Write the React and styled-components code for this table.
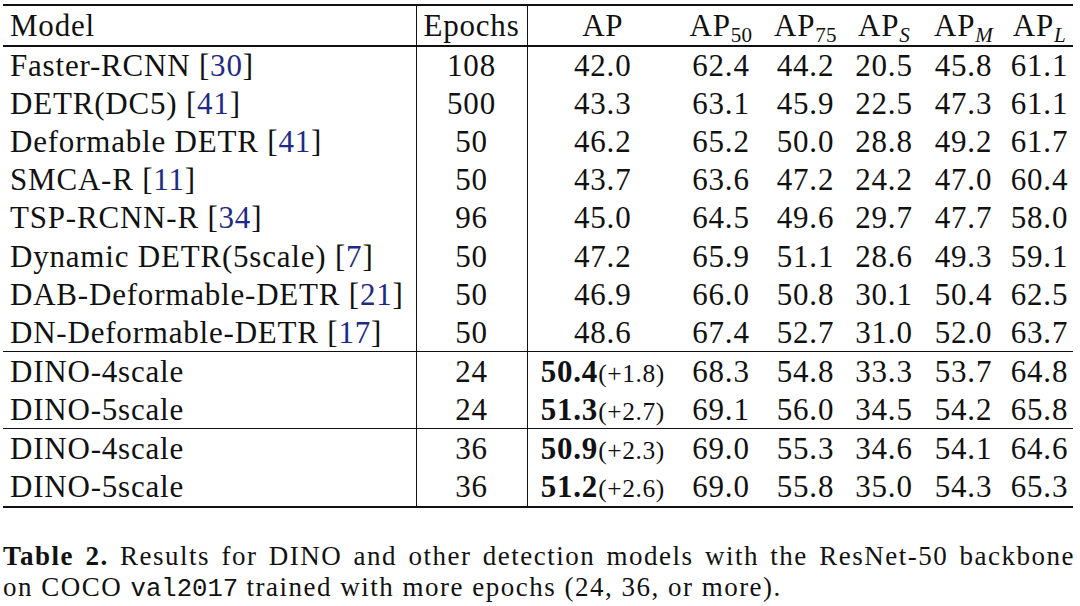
import React from 'react';
import styled, { createGlobalStyle } from 'styled-components';

const rows = [
  { group: 0, model: 'Faster-RCNN', cite: '30', epochs: '108', ap: '42.0', vals: ['62.4', '44.2', '20.5', '45.8', '61.1'] },
  { group: 0, model: 'DETR(DC5)', cite: '41', epochs: '500', ap: '43.3', vals: ['63.1', '45.9', '22.5', '47.3', '61.1'] },
  { group: 0, model: 'Deformable DETR', cite: '41', epochs: '50', ap: '46.2', vals: ['65.2', '50.0', '28.8', '49.2', '61.7'] },
  { group: 0, model: 'SMCA-R', cite: '11', epochs: '50', ap: '43.7', vals: ['63.6', '47.2', '24.2', '47.0', '60.4'] },
  { group: 0, model: 'TSP-RCNN-R', cite: '34', epochs: '96', ap: '45.0', vals: ['64.5', '49.6', '29.7', '47.7', '58.0'] },
  { group: 0, model: 'Dynamic DETR(5scale)', cite: '7', epochs: '50', ap: '47.2', vals: ['65.9', '51.1', '28.6', '49.3', '59.1'] },
  { group: 0, model: 'DAB-Deformable-DETR', cite: '21', epochs: '50', ap: '46.9', vals: ['66.0', '50.8', '30.1', '50.4', '62.5'] },
  { group: 0, model: 'DN-Deformable-DETR', cite: '17', epochs: '50', ap: '48.6', vals: ['67.4', '52.7', '31.0', '52.0', '63.7'] },
  { group: 1, model: 'DINO-4scale', epochs: '24', ap: '50.4', gain: '+1.8', vals: ['68.3', '54.8', '33.3', '53.7', '64.8'] },
  { group: 1, model: 'DINO-5scale', epochs: '24', ap: '51.3', gain: '+2.7', vals: ['69.1', '56.0', '34.5', '54.2', '65.8'] },
  { group: 2, model: 'DINO-4scale', epochs: '36', ap: '50.9', gain: '+2.3', vals: ['69.0', '55.3', '34.6', '54.1', '64.6'] },
  { group: 2, model: 'DINO-5scale', epochs: '36', ap: '51.2', gain: '+2.6', vals: ['69.0', '55.8', '35.0', '54.3', '65.3'] },
];

const colWidths = [413, 111, 151, 86, 83, 74, 85, 67];

const GlobalStyle = createGlobalStyle`
  html, body {
    margin: 0;
    padding: 0;
    background: #ffffff;
  }
  body {
    font-family: "Liberation Serif", "Times New Roman", serif;
    color: #111111;
  }
`;

const Page = styled.div`
  width: 1080px;
  height: 606px;
  overflow: hidden;
  padding: 4px 0 0 3px;
  box-sizing: border-box;
`;

const Table = styled.table`
  border-collapse: collapse;
  table-layout: fixed;
  width: 1070px;
  border-top: 2px solid #111;
  border-bottom: 2px solid #111;
  font-family: "Liberation Serif", "Times New Roman", serif;
  font-size: 31px;
  letter-spacing: 0.8px;
`;

const Head = styled.thead`
  border-bottom: 2px solid #111;
`;

const Group = styled.tbody`
  border-top: ${(p) => (p.$first ? '0' : '1px solid #111')};
`;

const Row = styled.tr`
  height: ${(p) => p.$h}px;
`;

const Cell = styled.td`
  padding: 0;
  white-space: nowrap;
  text-align: ${(p) => (p.$left ? 'left' : 'center')};
  padding-left: ${(p) => (p.$left ? '7px' : '0')};
  border-right: ${(p) => (p.$rule ? '1px solid #111' : '0')};
  font-weight: normal;
  line-height: 1;
  vertical-align: middle;
`;

const HeadCell = styled(Cell).attrs({ as: 'th' })``;

const Sub = styled.sub`
  font-size: 0.68em;
  vertical-align: -0.3em;
  line-height: 0;
  font-style: ${(p) => (p.$italic ? 'italic' : 'normal')};
  letter-spacing: 0.3px;
`;

const Cite = styled.span`
  color: #1f2a86;
`;

const Bold = styled.b`
  font-weight: bold;
`;

const Gain = styled.span`
  font-size: 0.82em;
  letter-spacing: 0.6px;
`;

const Caption = styled.div`
  margin-top: 33px;
  width: 1072px;
  font-size: 27px;
  line-height: 31px;
  letter-spacing: 1.5px;
  color: #111;
`;

const CaptionLine = styled.div`
  text-align: ${(p) => (p.$justify ? 'justify' : 'left')};
  text-align-last: ${(p) => (p.$justify ? 'justify' : 'left')};
  white-space: nowrap;
`;

const Mono = styled.span`
  font-family: "Liberation Mono", "Courier New", monospace;
  font-size: 0.95em;
  letter-spacing: 0;
`;

const AP = ({ sub, italic }) => (
  <>
    AP<Sub $italic={italic}>{sub}</Sub>
  </>
);

const groupHeights = [38.2, 38.5, 39];

export default function App() {
  const groups = [0, 1, 2].map((g) => rows.filter((r) => r.group === g));
  return (
    <Page>
      <GlobalStyle />
      <Table>
        <colgroup>
          {colWidths.map((w, i) => (
            <col key={i} style={{ width: w }} />
          ))}
        </colgroup>
        <Head>
          <Row $h={41}>
            <HeadCell $left $rule>Model</HeadCell>
            <HeadCell $rule>Epochs</HeadCell>
            <HeadCell>AP</HeadCell>
            <HeadCell><AP sub="50" /></HeadCell>
            <HeadCell><AP sub="75" /></HeadCell>
            <HeadCell><AP sub="S" italic /></HeadCell>
            <HeadCell><AP sub="M" italic /></HeadCell>
            <HeadCell><AP sub="L" italic /></HeadCell>
          </Row>
        </Head>
        {groups.map((list, g) => (
          <Group key={g} $first={g === 0}>
            {list.map((r, i) => (
              <Row key={i} $h={groupHeights[g]}>
                <Cell $left $rule>
                  {r.model}
                  {r.cite && (
                    <>
                      {' '}[<Cite>{r.cite}</Cite>]
                    </>
                  )}
                </Cell>
                <Cell $rule>{r.epochs}</Cell>
                <Cell>
                  {r.gain ? (
                    <>
                      <Bold>{r.ap}</Bold>
                      <Gain>({r.gain})</Gain>
                    </>
                  ) : (
                    r.ap
                  )}
                </Cell>
                {r.vals.map((v, j) => (
                  <Cell key={j}>{v}</Cell>
                ))}
              </Row>
            ))}
          </Group>
        ))}
      </Table>
      <Caption>
        <CaptionLine $justify>
          <Bold>Table 2.</Bold> Results for DINO and other detection models with the ResNet-50 backbone
        </CaptionLine>
        <CaptionLine>
          on COCO <Mono>val2017</Mono> trained with more epochs (24, 36, or more).
        </CaptionLine>
      </Caption>
    </Page>
  );
}
